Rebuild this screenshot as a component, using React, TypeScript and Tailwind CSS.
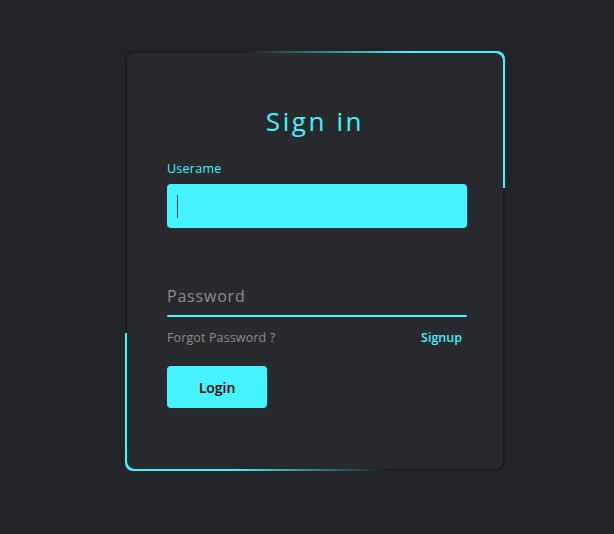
import React from "react";

const font = { fontFamily: '"Open Sans", "Liberation Sans", sans-serif' };

const App = () => {
  return (
    <div
      className="min-h-[534px] w-full bg-[#23242a] pt-[51px] pl-[125px]"
      style={font}
    >
      <div className="relative w-[380px] h-[420px] overflow-hidden rounded-lg bg-[#1c1c1c] p-[2px]">
        {/* glowing border pieces */}
        <div className="absolute top-0 right-0 w-[265px] h-[137px] bg-linear-to-r from-transparent from-0% to-[#45f3ff] to-65%" />
        <div className="absolute bottom-0 left-0 w-[265px] h-[138px] bg-linear-to-r from-[#45f3ff] from-40% to-transparent to-100%" />

        <form className="relative flex h-full flex-col rounded-lg bg-[#28292d] px-[40px] pt-[50px]">
          <h2 className="text-center text-[26px] leading-[36px] font-medium tracking-[0.1em] text-[#45f3ff]">
            Sign in
          </h2>

          <div className="mt-[22px] w-[300px]">
            <div className="text-[12.5px] leading-[16px] font-medium tracking-[0.02em] text-[#45f3ff]">
              Userame
            </div>
            <div className="mt-[7px] flex h-[44px] items-center rounded bg-[#45f3ff] pl-[10px]">
              <span className="block h-[23px] w-px bg-[#23242a]" />
            </div>
          </div>

          <div className="mt-[58px] w-[300px]">
            <div className="text-[16px] leading-[20px] tracking-[0.05em] text-[#8f8f8f]">
              Password
            </div>
            <div className="mt-[9px] h-[2px] rounded bg-[#45f3ff]" />
          </div>

          <div className="mt-[13px] flex justify-between pr-[1px] text-[12.5px] leading-[16px]">
            <span className="tracking-[0.01em] text-[#8f8f8f]">Forgot Password ?</span>
            <span className="font-semibold text-[#45f3ff]">Signup</span>
          </div>

          <button
            type="button"
            className="mt-[20px] h-[42px] w-[100px] rounded bg-[#45f3ff] text-[14px] font-semibold text-black"
          >
            Login
          </button>
        </form>
      </div>
    </div>
  );
};

export default App;
